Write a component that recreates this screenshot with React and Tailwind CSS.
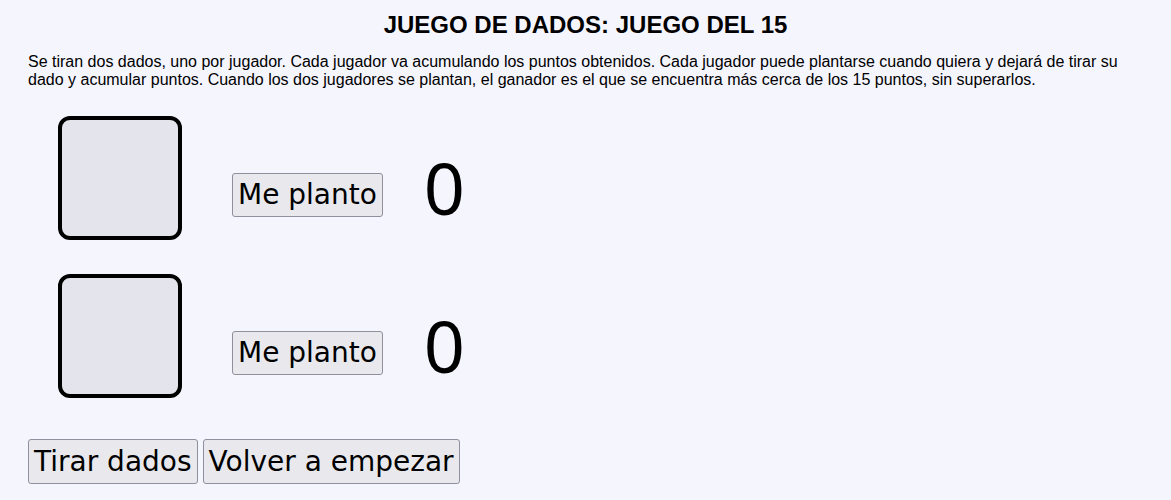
import React, { useState } from 'react';

const Dado = () => (
  <div className="w-[124px] h-[124px] rounded-[12px] border-4 border-black bg-[#e4e4ec]" />
);

const Jugador = ({ puntos, onPlantar }) => (
  <div className="flex items-start h-[158px]">
    <div className="ml-[30px] mt-[16px]">
      <Dado />
    </div>
    <button
      className="ml-[50px] mt-[73px] px-[5px] py-[4px] text-[28px] leading-[34px] bg-[#e9e9ed] border border-[#8f8f9d] rounded-[3px] text-black"
      onClick={onPlantar}
    >
      Me planto
    </button>
    <span className="ml-[41px] mt-[50px] text-[72px] leading-[74px] text-black font-['Noto_Sans',sans-serif]">{puntos}</span>
  </div>
);

export default function App() {
  const [puntos] = useState([0, 0]);

  return (
    <div className="min-h-[500px] bg-[#f5f5fe] pl-[28px] pr-[28px] pt-[11px] text-black" style={{ fontFamily: '"DejaVu Sans", sans-serif' }}>
      <h1 className="text-center text-[24px] font-bold leading-[28px] font-['Liberation_Sans',Arial,sans-serif]">
        JUEGO DE DADOS: JUEGO DEL 15
      </h1>
      <p className="mt-[14px] text-[16px] leading-[18px] font-['Liberation_Sans',Arial,sans-serif]">
        Se tiran dos dados, uno por jugador. Cada jugador va acumulando los puntos obtenidos. Cada jugador puede plantarse cuando quiera y dejará de tirar su dado y acumular puntos. Cuando los dos jugadores se plantan, el ganador es el que se encuentra más cerca de los 15 puntos, sin superarlos.
      </p>
      <div className="mt-[11px]">
        {puntos.map((p, i) => (
          <Jugador key={i} puntos={p} onPlantar={() => {}} />
        ))}
      </div>
      <div className="flex gap-[5px] mt-[23px]">
        <button className="px-[5px] py-[4px] text-[28px] leading-[35px] bg-[#e9e9ed] border border-[#8f8f9d] rounded-[3px]">
          Tirar dados
        </button>
        <button className="px-[5px] py-[4px] text-[28px] leading-[35px] bg-[#e9e9ed] border border-[#8f8f9d] rounded-[3px]">
          Volver a empezar
        </button>
      </div>
    </div>
  );
}
